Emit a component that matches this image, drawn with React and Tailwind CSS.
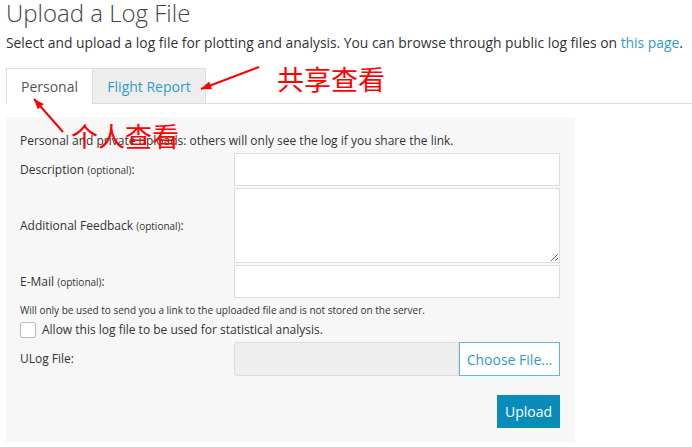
import React from 'react';

function Arrow({ x1, y1, x2, y2 }) {
  // red annotation arrow, head at (x2, y2)
  const ang = Math.atan2(y2 - y1, x2 - x1);
  const len = 11;
  const spread = 0.38;
  const ax = x2 - len * Math.cos(ang - spread);
  const ay = y2 - len * Math.sin(ang - spread);
  const bx = x2 - len * Math.cos(ang + spread);
  const by = y2 - len * Math.sin(ang + spread);
  return (
    <g>
      <line x1={x1} y1={y1} x2={x2} y2={y2} stroke="#ff0000" strokeWidth="2" />
      <polygon points={`${x2},${y2} ${ax},${ay} ${bx},${by}`} fill="#ff0000" />
    </g>
  );
}

function Row({ label, children, className = '' }) {
  return (
    <div className={`flex items-center ${className}`}>
      <div className="w-[214px] text-[12px] text-[#333]">
        {label} <span className="text-[10px]">(optional)</span>:
      </div>
      {children}
    </div>
  );
}

export default function App() {
  return (
    <div className="relative w-[692px] h-[447px] bg-white overflow-hidden font-['Open_Sans',sans-serif] text-[#333]">
      <div className="pl-[6px]">
        <h1 className="text-[24px] font-light leading-[28px] -mt-[1px] text-[#444]">Upload a Log File</h1>
        <p className="text-[13.85px] leading-[20px] mt-[6px]">
          Select and upload a log file for plotting and analysis. You can browse through public log files on{' '}
          <a className="text-[#2f9bc9]">this page</a>.
        </p>
        <div className="flex mt-[15px] border-b border-[#ddd] h-[36px]">
          <div className="w-[87px] h-[36px] border border-[#ddd] border-b-0 bg-white flex items-center justify-center text-[14px] text-[#555] -mb-px">
            Personal
          </div>
          <div className="w-[113px] h-[36px] border border-[#ddd] border-l-0 bg-[#eee] flex items-center justify-center text-[14px] text-[#2f9bc9]">
            Flight Report
          </div>
        </div>
        <div className="mt-[13px] w-[569px] h-[325px] bg-[#f7f7f7] pl-[14px] pr-[15px] pt-[16px]">
          <p className="text-[12px] leading-[16px]">Personal and private uploads: others will only see the log if you share the link.</p>
          <Row label="Description" className="mt-[4px]">
            <input className="flex-1 h-[33px] bg-white border border-[#ddd]" />
          </Row>
          <Row label="Additional Feedback" className="mt-[2px]">
            <textarea className="flex-1 h-[75px] bg-white border border-[#ddd]" />
          </Row>
          <Row label="E-Mail" className="mt-[2px]">
            <input className="flex-1 h-[33px] bg-white border border-[#ddd]" />
          </Row>
          <p className="text-[10px] leading-[14px] mt-[5px]">Will only be used to send you a link to the uploaded file and is not stored on the server.</p>
          <label className="flex items-center mt-[4px] h-[18px]">
            <span className="w-[16px] h-[16px] border border-[#bbb] rounded-[2px] bg-white"></span>
            <span className="ml-[6px] text-[12px]">Allow this log file to be used for statistical analysis.</span>
          </label>
          <div className="flex items-center mt-[3px]">
            <div className="w-[214px] text-[12px]">ULog File:</div>
            <div className="flex-1 flex h-[34px]">
              <div className="flex-1 bg-[#eee] border border-[#ddd] rounded-l-[3px]"></div>
              <button className="w-[101px] bg-white border border-[#5bb8dc] text-[14px] text-[#2f9bc9]">Choose File...</button>
            </div>
          </div>
          <div className="flex justify-end mt-[19px]">
            <button className="w-[63px] h-[33px] bg-[#0a8cba] text-white text-[14px]">Upload</button>
          </div>
        </div>
      </div>

      {/* red annotations */}
      <svg className="absolute left-0 top-0 pointer-events-none" width="692" height="447">
        <Arrow x1={259} y1={67} x2={201} y2={89} />
        <Arrow x1={63} y1={132} x2={34} y2={99} />
      </svg>
      <div className="absolute left-[277px] top-[63px] text-[27px] leading-[32px] text-[#ff0000] font-['Noto_Sans_CJK_SC',sans-serif]">共享查看</div>
      <div className="absolute left-[71px] top-[120px] text-[27px] leading-[32px] text-[#ff0000] font-['Noto_Sans_CJK_SC',sans-serif]">个人查看</div>
    </div>
  );
}
